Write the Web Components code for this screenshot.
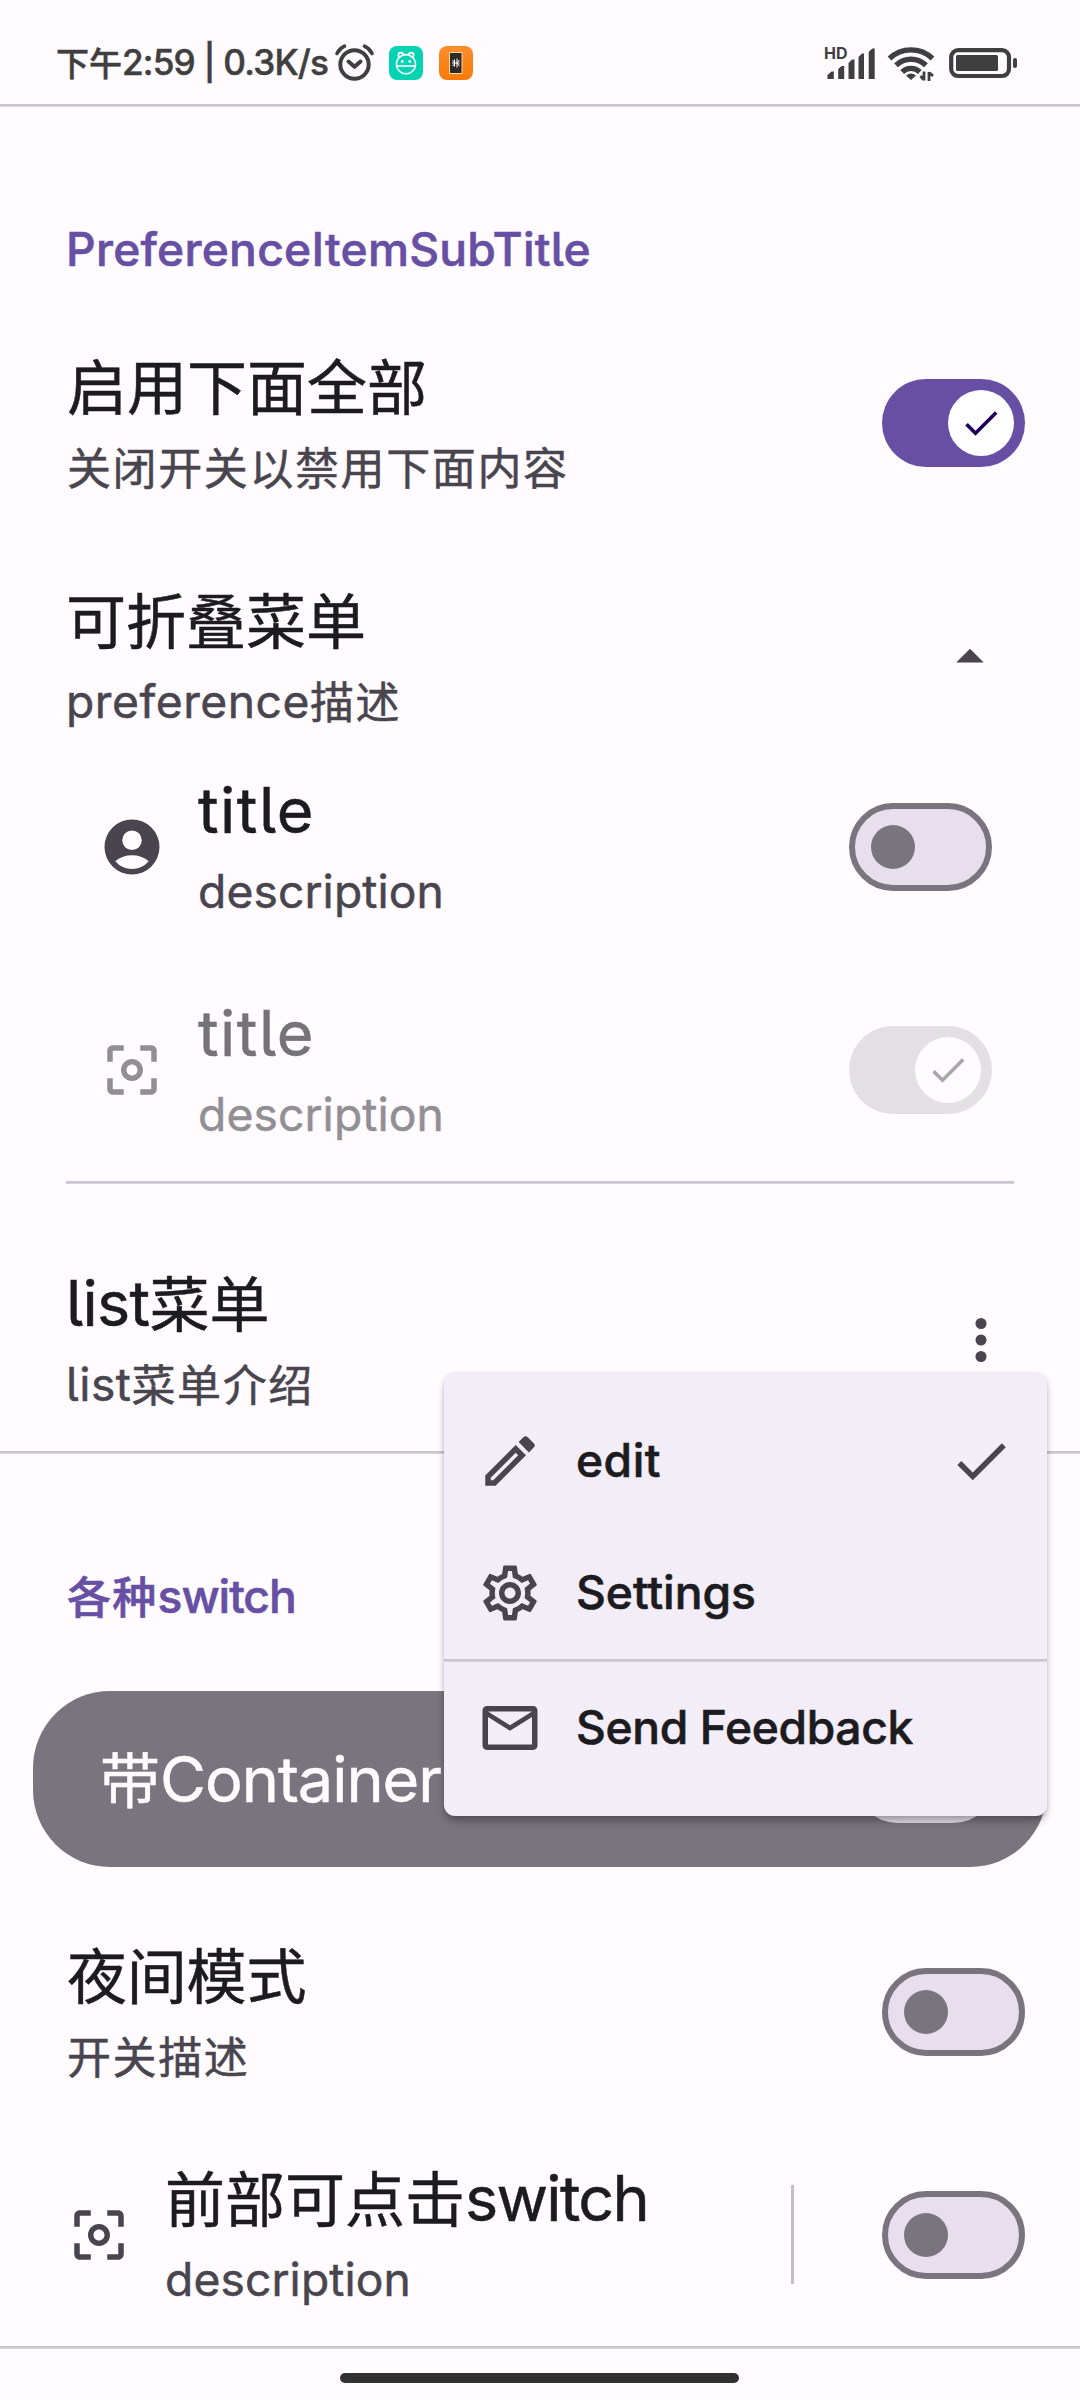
<!DOCTYPE html>
<html lang="zh-CN">
<head>
<meta charset="utf-8">
<title>Preference</title>
<style>
html,body{margin:0;padding:0}
body{width:1080px;height:2400px;overflow:hidden;background:#fffbfe;color:#1c1b1f;font-family:Inter,"Noto Sans CJK SC",sans-serif;font-feature-settings:"cv05" 1}
</style>
</head>
<body>
<pref-screen>
  <status-bar></status-bar>
  <pref-divider></pref-divider>
  <pref-subtitle style="height:205px;--top:113px"><fit-text w="525">PreferenceItemSubTitle</fit-text></pref-subtitle>
  <pref-item style="height:222px;--pl:67px">
    <span slot="title">启用下面全部</span><span slot="desc">关闭开关以禁用下面内容</span>
    <m3-switch slot="end" checked></m3-switch>
  </pref-item>
  <pref-item style="height:202px;--pt:44px;--pr:77px">
    <span slot="title">可折叠菜单</span><span slot="desc"><fit-text w="244">preference</fit-text>描述</span>
    <m3-icon slot="end" name="up"></m3-icon>
  </pref-item>
  <pref-item style="height:222px;--pl:99px;--pr:88px">
    <m3-icon slot="start" name="account"></m3-icon>
    <fit-text slot="title" w="117">title</fit-text><fit-text slot="desc" w="246">description</fit-text>
    <m3-switch slot="end"></m3-switch>
  </pref-item>
  <pref-item disabled style="height:223px;--pt:1px;--pl:99px;--pr:88px">
    <m3-icon slot="start" name="focus"></m3-icon>
    <fit-text slot="title" w="117">title</fit-text><fit-text slot="desc" w="246">description</fit-text>
    <m3-switch slot="end" checked disabled></m3-switch>
  </pref-item>
  <pref-divider style="margin:0 66px"></pref-divider>
  <pref-item style="height:267px;--pt:45px;--pr:66px">
    <span slot="title"><fit-text w="83.5">list</fit-text>菜单</span><span slot="desc"><fit-text w="65.5">list</fit-text>菜单介绍</span>
    <m3-icon slot="end" name="more"></m3-icon>
    <drop-menu slot="overlay">
      <menu-item icon="edit" checked><fit-text w="85">edit</fit-text></menu-item>
      <menu-item icon="settings"><fit-text w="180">Settings</fit-text></menu-item>
      <pref-divider></pref-divider>
      <menu-item icon="mail"><fit-text w="337">Send Feedback</fit-text></menu-item>
    </drop-menu>
  </pref-item>
  <pref-divider></pref-divider>
  <pref-subtitle style="height:237px;--top:113px;--left:67px"><span style="letter-spacing:1.3px">各种</span><fit-text w="138">switch</fit-text></pref-subtitle>
  <pref-container>带<fit-text w="281">Container</fit-text><m3-switch slot="end" tonal></m3-switch></pref-container>
  <pref-item style="height:256px;--pt:34px;--pl:67px">
    <span slot="title" style="letter-spacing:-.2px">夜间模式</span><span slot="desc">开关描述</span>
    <m3-switch slot="end"></m3-switch>
  </pref-item>
  <pref-item split style="height:223px;--pt:1px">
    <m3-icon slot="start" name="focus"></m3-icon>
    <span slot="title">前部可点击<fit-text w="183">switch</fit-text></span><fit-text slot="desc" w="246">description</fit-text>
    <m3-switch slot="end"></m3-switch>
  </pref-item>
  <pref-divider></pref-divider>
  <nav-handle></nav-handle>
</pref-screen>
<script>
const define = (name, html, setup) => customElements.define(name, class extends HTMLElement {
  constructor() {
    super();
    this.attachShadow({mode: 'open'}).innerHTML = html;
  }
  connectedCallback() { if (setup) setup.call(this, this.shadowRoot); }
});

const ICONS = {
  up: '<path d="M7 14l5-5 5 5z"/>',
  account: '<path fill-rule="evenodd" d="M12 2a10 10 0 1 0 0 20 10 10 0 0 0 0-20zM12 6a3.55 3.55 0 1 1 0 7.1A3.55 3.55 0 0 1 12 6zM5.9 17.15A9.7 9.7 0 0 1 18.1 17.15A8 8 0 0 1 5.9 17.15z"/>',
  focus: '<path d="M5 15H3v4c0 1.1.9 2 2 2h4v-2H5v-4zM5 5h4V3H5c-1.1 0-2 .9-2 2v4h2V5zm14-2h-4v2h4v4h2V5c0-1.1-.9-2-2-2zm0 16h-4v2h4c1.1 0 2-.9 2-2v-4h-2v4zM12 8c-2.21 0-4 1.79-4 4s1.79 4 4 4 4-1.79 4-4-1.79-4-4-4zm0 6c-1.1 0-2-.9-2-2s.9-2 2-2 2 .9 2 2-.9 2-2 2z"/>',
  more: '<circle cx="12" cy="6" r="2"/><circle cx="12" cy="12" r="2"/><circle cx="12" cy="18" r="2"/>',
  check: '<path d="M9 16.17L4.83 12l-1.42 1.41L9 19 21 7l-1.41-1.41z"/>',
  edit: '<path d="M14.06 9.02l.92.92L5.92 19H5v-.92l9.06-9.06M17.66 3c-.25 0-.51.1-.7.29l-1.83 1.83 3.75 3.75 1.83-1.83c.39-.39.39-1.02 0-1.41l-2.34-2.34c-.2-.2-.45-.29-.71-.29zm-3.6 3.19L3 17.25V21h3.75L17.81 9.94l-3.75-3.75z"/>',
  settings: '<path d="M19.43 12.98c.04-.32.07-.64.07-.98 0-.34-.03-.66-.07-.98l2.11-1.65c.19-.15.24-.42.12-.64l-2-3.46c-.09-.16-.26-.25-.44-.25-.06 0-.12.01-.17.03l-2.49 1c-.52-.4-1.08-.73-1.69-.98l-.38-2.65C14.46 2.18 14.25 2 14 2h-4c-.25 0-.46.18-.49.42l-.38 2.65c-.61.25-1.17.59-1.69.98l-2.49-1c-.06-.02-.12-.03-.18-.03-.17 0-.34.09-.43.25l-2 3.46c-.13.22-.07.49.12.64l2.11 1.65c-.04.32-.07.65-.07.98 0 .33.03.66.07.98l-2.11 1.65c-.19.15-.24.42-.12.64l2 3.46c.09.16.26.25.44.25.06 0 .12-.01.17-.03l2.49-1c.52.4 1.08.73 1.69.98l.38 2.65c.03.24.24.42.49.42h4c.25 0 .46-.18.49-.42l.38-2.65c.61-.25 1.17-.59 1.69-.98l2.49 1c.06.02.12.03.18.03.17 0 .34-.09.43-.25l2-3.46c.12-.22.07-.49-.12-.64l-2.11-1.65zm-1.98-1.71c.04.31.05.52.05.73 0 .21-.02.43-.05.73l-.14 1.13.89.7 1.08.84-.7 1.21-1.27-.51-1.04-.42-.9.68c-.43.32-.84.56-1.25.73l-1.06.43-.16 1.13-.2 1.35h-1.4l-.19-1.35-.16-1.13-1.06-.43c-.43-.18-.83-.41-1.23-.71l-.91-.7-1.06.43-1.27.51-.7-1.21 1.08-.84.89-.7-.14-1.13c-.03-.31-.05-.54-.05-.74s.02-.43.05-.73l.14-1.13-.89-.7-1.08-.84.7-1.21 1.27.51 1.04.42.9-.68c.43-.32.84-.56 1.25-.73l1.06-.43.16-1.13.2-1.35h1.39l.19 1.35.16 1.13 1.06.43c.43.18.83.41 1.23.71l.91.7 1.06-.43 1.27-.51.7 1.21-1.07.85-.89.7.14 1.13zM12 8c-2.21 0-4 1.79-4 4s1.79 4 4 4 4-1.79 4-4-1.79-4-4-4zm0 6c-1.1 0-2-.9-2-2s.9-2 2-2 2 .9 2 2-.9 2-2 2z"/>',
  mail: '<path d="M22 5.6c0-.9-.7-1.6-1.6-1.6H3.6C2.7 4 2 4.700 2 5.600v12.800c0 .9.7 1.600 1.600 1.600h16.800c.9 0 1.600-.7 1.600-1.600V5.600zM20 6l-8 5-8-5h16zm0 12H4V8l8 5 8-5v10z"/>'
};

define('pref-screen', `<style>:host{display:flex;flex-direction:column;width:1080px;height:2400px;background:#fffbfe}</style><slot></slot>`);

define('pref-divider', `<style>:host{display:block;flex:none;height:3px;background:linear-gradient(#cac4d0 0 2px,#d9d4dd 2px)}</style>`);

define('pref-subtitle', `<style>:host{display:block;flex:none;box-sizing:border-box;padding:var(--top) 66px 0 var(--left,66px);font-size:44px;line-height:62px;font-weight:500;color:#6750a4;white-space:nowrap;-webkit-text-stroke:.6px currentColor}</style><slot></slot>`);

define('m3-icon', `<style>:host{display:block;flex:none;width:66px;height:66px}svg{display:block;width:100%;height:100%;fill:currentColor}</style><svg viewBox="0 0 24 24"></svg>`,
  function (root) { root.querySelector('svg').innerHTML = ICONS[this.getAttribute('name')]; });

define('m3-switch', `<style>
:host{display:flex;flex:none;box-sizing:border-box;width:143px;height:88px;border-radius:44px;border:6px solid #79747e;background:#e7e0ec;align-items:center;padding-left:16px}
i{display:flex;width:44px;height:44px;border-radius:50%;background:#79747e;align-items:center;justify-content:center}
m3-icon{display:none;width:44px;height:44px;color:#21005d}
:host([tonal]){border-color:#e7e0ec}
:host([checked]){border:0;background:#6750a4;padding-left:66px}
:host([checked]) i{width:66px;height:66px;background:#fff}
:host([checked]) m3-icon{display:block}
:host([checked][disabled]){background:#e2e0e3}
:host([checked][disabled]) i{background:#fffbfe}
:host([checked][disabled]) m3-icon{color:#a9a7aa}
</style><i><m3-icon name="check"></m3-icon></i>`);

define('pref-item', `<style>
:host{display:flex;flex:none;box-sizing:border-box;position:relative;align-items:center;padding:var(--pt,0px) var(--pr,55px) 0 var(--pl,66px);color:#49454f}
slot[name=start]::slotted(*){margin-right:33px}
.text{flex:1;min-width:0;white-space:nowrap;-webkit-text-stroke:.5px currentColor}
.title{box-sizing:border-box;height:92px;padding-top:1px;font-size:60px;line-height:92px;color:#1c1b1f}
.desc{height:72px;font-size:44px;line-height:72px;letter-spacing:1.6px}
.rule{display:none;width:3px;height:99px;background:#c2bfc3;margin:0 88px 2px 0}
:host([split]) .rule{display:block}
:host([disabled]){color:#918f94}
:host([disabled]) .title{color:#757377}
</style>
<slot name="start"></slot>
<div class="text"><div class="title"><slot name="title"></slot></div><div class="desc"><slot name="desc"></slot></div></div>
<div class="rule"></div>
<slot name="end"></slot><slot name="overlay"></slot>`);

define('pref-container', `<style>
:host{display:flex;flex:none;box-sizing:border-box;height:176px;margin:0 33px;padding:0 50px 0 67px;border-radius:77px;background:#79747e;color:#fffbfe;align-items:center}
.title{flex:1;font-size:60px;line-height:92px;padding-top:3px;white-space:nowrap;-webkit-text-stroke:.5px currentColor}
</style><div class="title"><slot></slot></div><slot name="end"></slot>`);

define('drop-menu', `<style>
:host{display:flex;flex-direction:column;box-sizing:border-box;position:absolute;z-index:2;top:188px;right:33px;width:603px;height:444px;padding:23px 0 22px;border-radius:11px;background:#f3edf7;box-shadow:0 7px 9px -1px rgba(0,0,0,.24),0 2px 5px rgba(0,0,0,.12)}
</style><slot></slot>`);

define('menu-item', `<style>
:host{display:flex;box-sizing:border-box;height:132px;padding:0 33px;align-items:center;gap:33px;color:#49454f}
.label{flex:1;font-size:44px;line-height:60px;padding-top:2px;font-weight:500;color:#1c1b1f;white-space:nowrap;-webkit-text-stroke:.6px currentColor}
.check{display:none}
:host([checked]) .check{display:block}
</style><m3-icon class="lead"></m3-icon><div class="label"><slot></slot></div><m3-icon class="check" name="check"></m3-icon>`,
  function (root) { root.querySelector('.lead').shadowRoot.querySelector('svg').innerHTML = ICONS[this.getAttribute('icon')]; });

define('status-bar', `<style>
:host{display:flex;flex:none;box-sizing:border-box;height:104px;padding:44px 62px 0 56px;color:#3f3f3f;align-items:flex-start}
svg{display:block;flex:none;overflow:visible}
.clock{width:279px;font-size:33.5px;line-height:40px;font-weight:500;white-space:nowrap;-webkit-text-stroke:.5px currentColor}
.clock span{font-size:33px}
.apps{display:flex;gap:16px;padding:2px 0 0 15px;flex:1}
.right{display:flex}
.cell{width:63px;position:relative}
.hd{position:absolute;left:-1px;top:-1px;font:700 16px/20px Inter,sans-serif}
</style>
<div class="clock"><span>下午</span><fit-text w="206">2:59 | 0.3K/s</fit-text></div>
<svg width="39" height="38" fill="none" stroke="currentColor" stroke-width="4" stroke-linecap="round"><circle cx="19.500" cy="20.500" r="14.200"/><path d="M13.500 17.500l6 5.300 6-5.300" stroke-linejoin="round"/><path d="M2 9.500Q4.500 4.500 9.500 2.200M37 9.500Q34.500 4.500 29.500 2.200" stroke-width="3.600"/></svg>
<div class="apps">
<svg width="34" height="34"><rect width="34" height="34" rx="8" fill="#05d3b4"/><g fill="#05d3b4" stroke="#fff" stroke-width="1.600"><circle cx="11.800" cy="9" r="2.400"/><circle cx="22.200" cy="9" r="2.400"/><ellipse cx="17" cy="18.200" rx="9.600" ry="9.600"/><path d="M7.600 20h18.800"/></g><circle cx="13.200" cy="15.400" r="1.400" fill="#fff"/><circle cx="20.800" cy="15.400" r="1.400" fill="#fff"/></svg>
<svg width="34" height="34"><defs><linearGradient id="o" x2="0" y2="1"><stop stop-color="#fb8e2c"/><stop offset="1" stop-color="#f77a08"/></linearGradient></defs><rect width="34" height="34" rx="8" fill="url(#o)"/><rect x="10.500" y="6.500" width="12.500" height="21" fill="#2d2a28" stroke="#ffd9a8" stroke-width="1"/><path d="M15.500 13.500v7M18 12.500v9M13 17h7.500M13.500 14.500l2 1.500M13.500 20l2-2M20.500 14l-2.500 3 2.500 3" stroke="#fff" stroke-width="1" fill="none"/></svg>
</div>
<div class="right">
<div class="cell"><div class="hd">HD</div><svg width="52" height="38" fill="currentColor"><path d="M2.500 35v-4l4-3.500h2.300V35zM13.200 35V25l3.500-3h2.500v13zM23.500 35V19l3.500-3.500h2.500V35zM33.500 35V13l3.500-3.500h2V35zM43.700 35V8l3.500-3.500h2.500V35z"/></svg></div>
<svg width="61" height="38" fill="none" stroke="currentColor" stroke-width="5.400"><path d="M1.500 14.500A31 31 0 0 1 44.500 14.500M8 21.300A21.500 21.500 0 0 1 38 21.300M14.200 28A12.500 12.500 0 0 1 31.800 28"/><path d="M18 31.500Q23 27.500 28 31.500L23 36z" fill="currentColor" stroke="none"/><path d="M36 27.500v9M32.500 32l3 3.500M41 37v-9M41 28.500l4 3.500" stroke-width="2.800"/></svg>
<svg width="69" height="38"><rect x="2.200" y="6.200" width="57.800" height="25.800" rx="7" fill="none" stroke="currentColor" stroke-width="4.200"/><rect x="7" y="11" width="42" height="16" rx="1.500" fill="currentColor"/><rect x="64" y="14" width="4" height="10" rx="2" fill="currentColor"/></svg>
</div>`);

define('nav-handle', `<style>:host{display:flex;justify-content:center;height:51px;padding:24px 1px 0 0;box-sizing:border-box}i{width:399px;height:10px;border-radius:5px;background:#313131}</style><i></i>`);

// Spreads the glyphs of a run evenly over the advance width given in "w".
define('fit-text', `<style>:host{display:inline-block;font-size:1.05em;white-space:nowrap;letter-spacing:0;line-height:1;vertical-align:1px}</style><slot></slot>`,
  function () {
    const gap = (Number(this.getAttribute('w')) - this.getBoundingClientRect().width) / this.textContent.length;
    this.style.letterSpacing = gap.toFixed(3) + 'px';
  });
</script>
</body>
</html>
